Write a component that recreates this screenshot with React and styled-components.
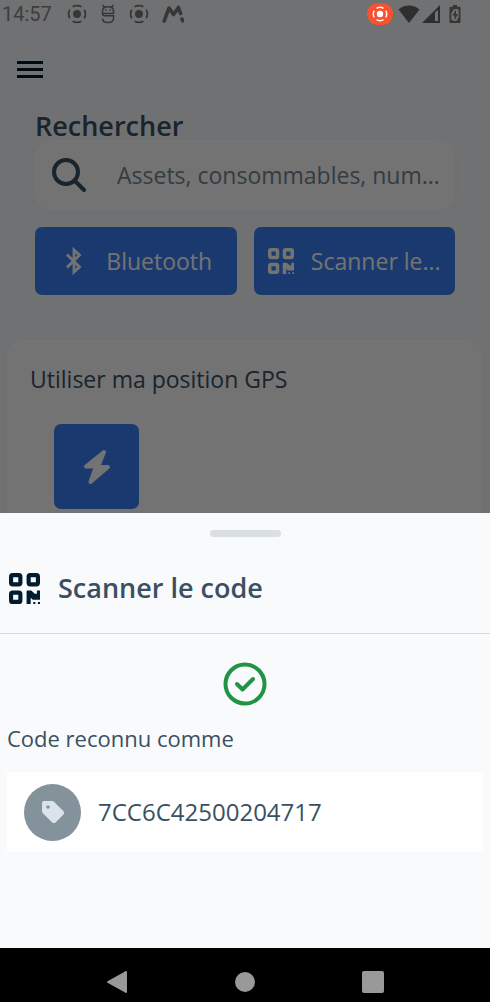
import React from 'react'
import styled, { createGlobalStyle } from 'styled-components'

const GlobalStyle = createGlobalStyle`
* {
    box-sizing: border-box;
}
body {
    margin: 0;
    font-family: "Open Sans", "Noto Sans", sans-serif;
    color: #3a5062;
}
button, input {
    font-family: inherit;
    border: none;
    padding: 0;
}
svg {
    display: block;
    flex-shrink: 0;
}
`
const Page = styled.div`
display: flex;
flex-direction: column;
height: 100vh;
background-color: #f8fafc;
`
const Screen = styled.div`
position: relative;
flex: 1;
min-height: 0;
overflow: hidden;
`
const Scrim = styled.div`
position: absolute;
inset: 0;
background-color: rgba(0, 0, 0, 0.55);
`
const StatusBar = styled.div`
display: flex;
align-items: center;
justify-content: space-between;
height: 28px;
padding: 0 29px 0 2px;
color: #787878;
`
const StatusGroup = styled.div`
display: flex;
align-items: center;
gap: ${(props) => props.$gap}px;
`
const Clock = styled.span`
width: 52px;
font-family: Roboto, sans-serif;
font-size: 20px;
line-height: 28px;
color: #8a8a8a;
`
/* Above the scrim, the recording badge is never dimmed */
const RecordBadge = styled.span`
position: relative;
z-index: 1;
display: flex;
align-items: center;
justify-content: center;
width: 26px;
height: 22px;
border-radius: 11px;
background-color: #f9502f;
color: white;
`
const SystemIcons = styled.div`
display: flex;
align-items: center;
gap: 2px;
margin-right: 4px;
color: #666666;
`
const TopBar = styled.div`
display: flex;
align-items: center;
height: 84px;
padding: 0 16px;
`
const MenuButton = styled.button`
background: none;
color: #001c2e;
cursor: pointer;
`
const SearchSection = styled.section`
padding: 0 35px;
`
const Title = styled.h1`
margin: 0;
font-size: 27px;
line-height: 28px;
font-weight: 600;
`
const SearchBox = styled.label`
display: flex;
align-items: center;
gap: 30px;
height: 70px;
padding: 0 16px;
border-radius: 16px;
background-color: white;
box-shadow: 0 2px 12px rgba(0, 0, 0, 0.02);
`
const SearchInput = styled.input`
flex: 1;
min-width: 0;
font-size: 23px;
line-height: 32px;
background: none;
outline: none;
&::placeholder {
    color: #748593;
    opacity: 1;
}
`
const Actions = styled.div`
display: grid;
grid-template-columns: 1fr 1fr;
gap: 17px;
margin-top: 17px;
`
const ActionButton = styled.button`
display: flex;
align-items: center;
justify-content: center;
gap: 17px;
height: 68px;
border-radius: 7px;
background-color: #3b82f6;
color: white;
font-size: 23px;
font-weight: 500;
white-space: nowrap;
cursor: pointer;
`
const GpsCard = styled.section`
margin: 45px 7px 0;
padding: 23px;
border-radius: 16px;
background-color: white;
box-shadow: 0 2px 12px rgba(0, 0, 0, 0.02);
`
const Text = styled.p`
margin: 0;
font-size: ${(props) => props.$size || 23}px;
line-height: 32px;
font-weight: 500;
`
const Tile = styled.button`
display: flex;
align-items: center;
justify-content: center;
width: 85px;
height: 85px;
margin: 29px 24px 0;
border-radius: 7px;
background-color: #3b82f6;
color: white;
cursor: pointer;
`
const Sheet = styled.section`
display: flex;
flex-direction: column;
min-height: 435px;
background-color: #f8fafc;
`
const Handle = styled.div`
align-self: center;
width: 71px;
height: 7px;
margin-top: 17px;
border-radius: 4px;
background-color: #d8e0e4;
`
const SheetHeader = styled.header`
display: flex;
align-items: center;
gap: 18px;
height: 97px;
padding: 6px 9px 0;
border-bottom: 1px solid #d0dbe4;
svg {
    color: #001c2e;
}
`
const SheetTitle = styled.h2`
margin: 0;
font-size: 27px;
line-height: 36px;
font-weight: 600;
`
const SheetBody = styled.div`
display: flex;
flex-direction: column;
padding: 28px 7px;
`
const Success = styled.div`
align-self: center;
margin-bottom: 16px;
color: #1f9447;
`
const CodeRow = styled.div`
display: flex;
align-items: center;
gap: 17px;
height: 80px;
margin-top: 18px;
padding: 0 17px;
background-color: white;
`
const Avatar = styled.span`
display: flex;
align-items: center;
justify-content: center;
width: 57px;
height: 57px;
border-radius: 50%;
background-color: #84939b;
color: #dbe3ea;
`
const SystemNav = styled.nav`
display: flex;
justify-content: center;
height: 54px;
padding-top: 14px;
background-color: black;
`
const NavButton = styled.button`
display: flex;
justify-content: center;
align-items: center;
width: 128px;
height: 40px;
background: none;
color: #999999;
cursor: pointer;
`

const RecordIcon = ({ size }) => (
    <svg width={size} height={size} viewBox="0 0 20 20" fill="none" stroke="currentColor" strokeWidth="1.8">
        <circle cx="10" cy="10" r="4" fill="currentColor" stroke="none" />
        <circle cx="10" cy="10" r="8.4" pathLength="80" strokeDasharray="14 6" strokeDashoffset="7" />
    </svg>
)

const FaceIcon = () => (
    <svg width="16" height="20" viewBox="0 0 16 20" fill="none" stroke="currentColor" strokeWidth="1.500">
        <path d="M2.500 1l2 2.300M13.500 1l-2 2.300M2.500 9.500V7c0-2.800 2-4.300 5.500-4.300s5.500 1.500 5.500 4.300v2.500zM2.500 9.500c0 1.700.8 2.300 2.200 2.300h8.800v2.200c0 3-2 4.600-5.500 4.600s-5.500-1.600-5.500-4.100" />
        <path d="M5 6h1.600M9.400 6H11" />
    </svg>
)

const ZigzagIcon = () => (
    <svg width="22" height="18" viewBox="0 0 22 18" fill="none" stroke="currentColor" strokeWidth="3.600" strokeLinecap="round" strokeLinejoin="round">
        <path d="M2.200 16L7 3l4.500 6.500L16.500 2.500l2 6M20 14l.6 1.800" />
    </svg>
)

const WifiIcon = () => (
    <svg width="22" height="18" viewBox="0 0 22 18" fill="currentColor">
        <path d="M11 18L.5 4.500C3.500 1.800 7 .5 11 .5s7.500 1.300 10.500 4z" />
    </svg>
)

const SignalIcon = () => (
    <svg width="18" height="18" viewBox="0 0 18 18" fill="currentColor">
        <path fillRule="evenodd" d="M0 18L18 0v18zM13 7.500V16h3V5z" />
    </svg>
)

const BatteryIcon = () => (
    <svg width="12" height="18" viewBox="0 0 12 18" fill="currentColor">
        <path fillRule="evenodd" d="M4 0h4v1.800h2.500q1 0 1 1V17q0 1-1 1h-9q-1 0-1-1V2.800q0-1 1-1H4zM5 4L2.300 8v6.500L4.500 16h3l2.200-4V5L8 4z" />
        <path d="M7 4.500L3.500 10.500H5.500V15.500L9 9H7z" />
    </svg>
)

const MenuIcon = () => (
    <svg width="28" height="20" viewBox="0 0 28 20" fill="currentColor">
        <path d="M1 1h26v3H1zM1 8h26v3H1zM1 15h26v3H1z" />
    </svg>
)

const SearchIcon = () => (
    <svg width="36" height="36" viewBox="0 0 36 36" fill="none" stroke="#3a5062" strokeWidth="4" strokeLinecap="round">
        <circle cx="15" cy="15" r="12" />
        <path d="M24 24l9 9" />
    </svg>
)

const BluetoothIcon = () => (
    <svg width="30" height="30" viewBox="0 0 30 30" fill="none" stroke="currentColor" strokeWidth="2.800">
        <path d="M8 8.500L20.500 21 15 26V4l5.500 5L8 21.500" />
    </svg>
)

const QrIcon = ({ size }) => (
    <svg width={size} height={size} viewBox="0 0 30 30" fill="none" stroke="currentColor" strokeWidth="4">
        <rect x="2" y="2" width="9" height="9" rx="1.500" />
        <rect x="19" y="2" width="9" height="9" rx="1.500" />
        <rect x="2" y="19" width="9" height="9" rx="1.500" />
        <path d="M17 18q0-1 1-1h3.500l3.500 3h2v-3h3v9h-7l-2-2v6h-4zM23.500 28h2v2h-2zM28 28h2v2h-2z" fill="currentColor" stroke="none" />
    </svg>
)

const BoltIcon = () => (
    <svg width="28" height="36" viewBox="0 0 28 36" fill="currentColor" stroke="currentColor" strokeWidth="4" strokeLinejoin="round">
        <path d="M21 3L3 17.500h10L7.500 33 25 18H15z" />
    </svg>
)

const CheckIcon = () => (
    <svg width="44" height="44" viewBox="0 0 44 44" fill="none" stroke="currentColor" strokeWidth="4" strokeLinecap="round" strokeLinejoin="round">
        <circle cx="22" cy="22" r="19.500" />
        <path d="M14 22l5.500 5.500L30 17" />
    </svg>
)

const TagIcon = () => (
    <svg width="24" height="24" viewBox="0 0 24 24" fill="currentColor">
        <path fillRule="evenodd" d="M1 3a2 2 0 0 1 2-2h8c1 0 1.600.3 2.200.9l9 9c1.200 1.200 1.200 2.700 0 3.900l-7.400 7.400c-1.200 1.200-2.700 1.200-3.900 0l-9-9C1.300 12.600 1 12 1 11zM7 5.200a1.800 1.800 0 1 0 0 3.600 1.800 1.800 0 0 0 0-3.600z" />
    </svg>
)

const App = () => {
    return (
        <Page>
            <GlobalStyle />
            <Screen>
                <StatusBar>
                    <StatusGroup $gap={13}>
                        <Clock>14:57</Clock>
                        <RecordIcon size={20} />
                        <FaceIcon />
                        <RecordIcon size={20} />
                        <ZigzagIcon />
                    </StatusGroup>
                    <StatusGroup $gap={5}>
                        <RecordBadge><RecordIcon size={16} /></RecordBadge>
                        <SystemIcons>
                            <WifiIcon />
                            <SignalIcon />
                        </SystemIcons>
                        <BatteryIcon />
                    </StatusGroup>
                </StatusBar>
                <TopBar>
                    <MenuButton aria-label="Menu"><MenuIcon /></MenuButton>
                </TopBar>
                <SearchSection>
                    <Title>Rechercher</Title>
                    <SearchBox>
                        <SearchIcon />
                        <SearchInput type="text" aria-label="Rechercher" placeholder="Assets, consommables, num..." />
                    </SearchBox>
                    <Actions>
                        <ActionButton><BluetoothIcon />Bluetooth</ActionButton>
                        <ActionButton><QrIcon size={26} />Scanner le...</ActionButton>
                    </Actions>
                </SearchSection>
                <GpsCard>
                    <Text>Utiliser ma position GPS</Text>
                    <Tile aria-label="Position GPS"><BoltIcon /></Tile>
                </GpsCard>
                <Scrim />
            </Screen>
            <Sheet>
                <Handle />
                <SheetHeader>
                    <QrIcon size={31} />
                    <SheetTitle>Scanner le code</SheetTitle>
                </SheetHeader>
                <SheetBody>
                    <Success><CheckIcon /></Success>
                    <Text $size={22}>Code reconnu comme</Text>
                    <CodeRow>
                        <Avatar><TagIcon /></Avatar>
                        <Text $size={24}>7CC6C42500204717</Text>
                    </CodeRow>
                </SheetBody>
            </Sheet>
            <SystemNav>
                <NavButton aria-label="Retour">
                    <svg width="22" height="24" viewBox="0 0 22 24" fill="currentColor" stroke="currentColor" strokeWidth="2" strokeLinejoin="round">
                        <path d="M20 2v20L2 12z" />
                    </svg>
                </NavButton>
                <NavButton aria-label="Accueil">
                    <svg width="20" height="20" viewBox="0 0 20 20" fill="currentColor">
                        <circle cx="10" cy="10" r="10" />
                    </svg>
                </NavButton>
                <NavButton aria-label="Applications">
                    <svg width="22" height="22" viewBox="0 0 22 22" fill="currentColor">
                        <rect width="22" height="22" rx="2" />
                    </svg>
                </NavButton>
            </SystemNav>
        </Page>
    )
}

export default App
